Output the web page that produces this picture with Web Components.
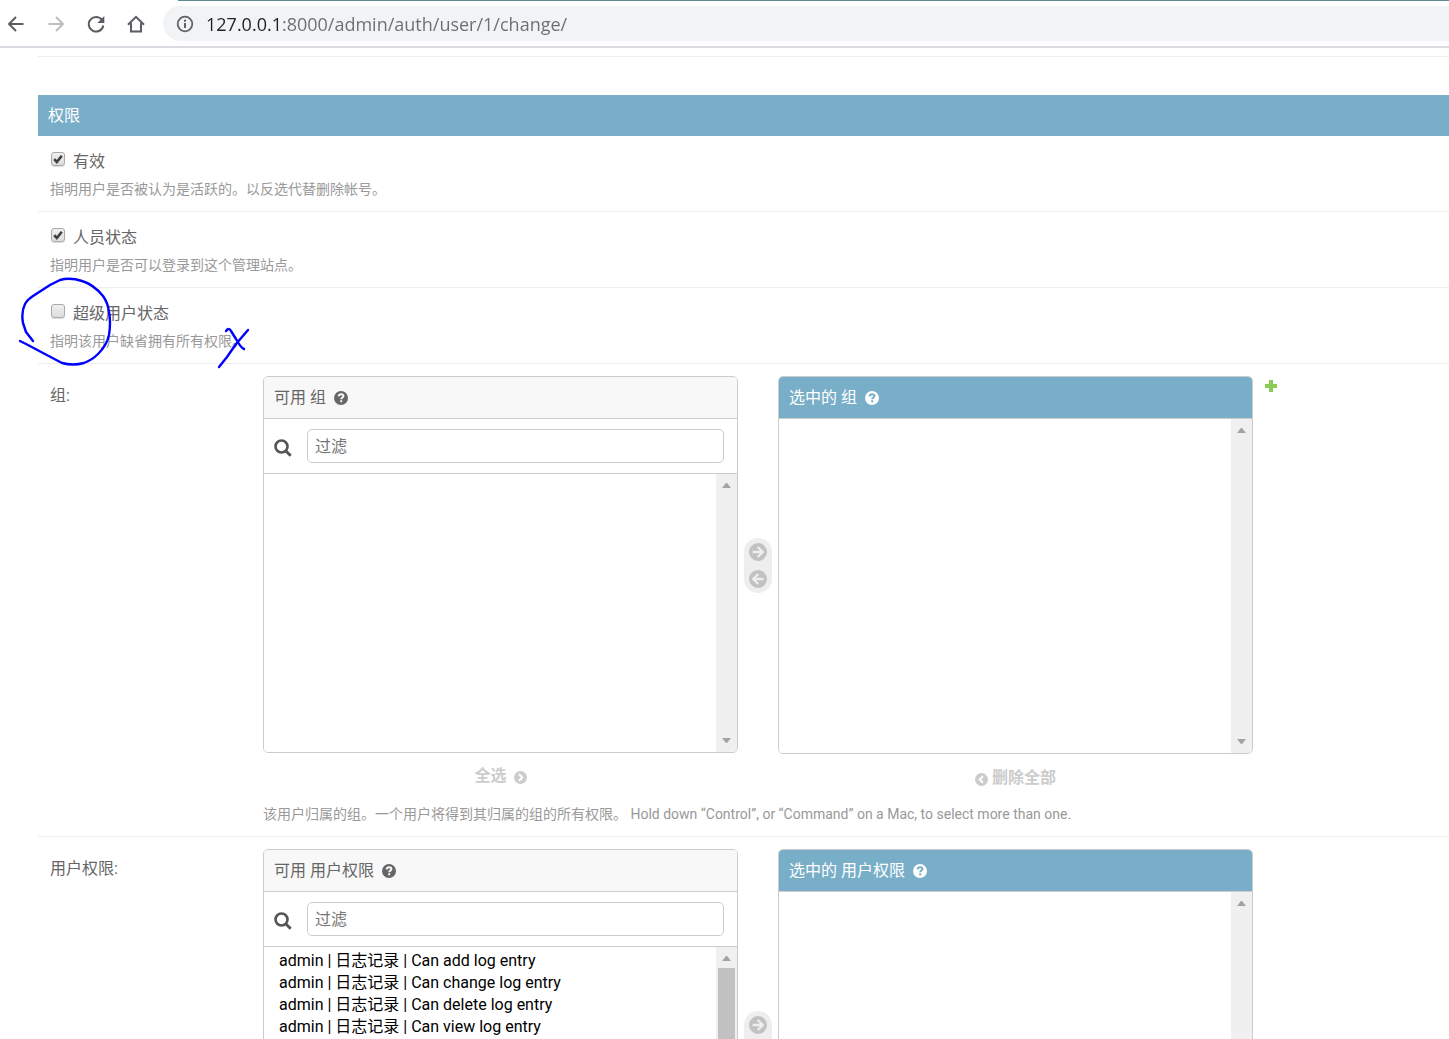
<!DOCTYPE html>
<html lang="zh-CN">
<head>
<meta charset="utf-8">
<title>修改 用户</title>
<style>
  body {
    margin: 0;
    background: #fff;
    color: #666;
    font: 16px/24px Roboto, "Noto Sans CJK SC", sans-serif;
    overflow-x: hidden;
  }
</style>
</head>
<body>
<admin-page>
  <browser-bar slot="bar" host="127.0.0.1" path=":8000/admin/auth/user/1/change/"></browser-bar>
  <field-module heading="权限">
    <check-row checked><span>有效</span><span slot="help">指明用户是否被认为是活跃的。以反选代替删除帐号。</span></check-row>
    <check-row checked><span>人员状态</span><span slot="help">指明用户是否可以登录到这个管理站点。</span></check-row>
    <check-row><span>超级用户状态</span><span slot="help">指明该用户缺省拥有所有权限。</span></check-row>
    <selector-row name="组" addable bulk>
      <span slot="help">该用户归属的组。一个用户将得到其归属的组的所有权限。 Hold down “Control”, or “Command” on a Mac, to select more than one.</span>
    </selector-row>
    <selector-row name="用户权限">
      <option>admin | 日志记录 | Can add log entry</option>
      <option>admin | 日志记录 | Can change log entry</option>
      <option>admin | 日志记录 | Can delete log entry</option>
      <option>admin | 日志记录 | Can view log entry</option>
    </selector-row>
  </field-module>
  <ink-marks slot="ink"></ink-marks>
</admin-page>

<script>
class Base extends HTMLElement {
  connectedCallback() {
    if (this.shadowRoot) return;
    const root = this.attachShadow({ mode: 'open' });
    root.innerHTML = this.view();
    this.ready(root);
  }
  ready() {}
}

const ICONS = {
  back: [20, '<path d="M17.500 10H3.500M10 3L3 10l7 7" fill="none" stroke="currentColor" stroke-width="2"/>'],
  forward: [20, '<path d="M2.500 10H16.500M10 3l7 7-7 7" fill="none" stroke="currentColor" stroke-width="2"/>'],
  reload: [20, '<path d="M16.300 6.400A7.300 7.300 0 1 0 17.300 11.500" fill="none" stroke="currentColor" stroke-width="2"/><path d="M18.300 2v7h-7z" fill="currentColor"/>'],
  home: [20, '<path d="M2 10.800L10 2.800l8 8M5 9V17.500h10V9" fill="none" stroke="currentColor" stroke-width="2"/>'],
  info: [18, '<circle cx="9" cy="9" r="7.300" fill="none" stroke="currentColor" stroke-width="1.800"/><path d="M9 8v5M9 4.800v1.900" stroke="currentColor" stroke-width="2"/>'],
  help: [14, '<circle cx="7" cy="7" r="7" fill="currentColor"/><path d="M4.700 5.300C4.900 3.900 5.900 3.300 7.100 3.300c1.300 0 2.300.7 2.300 1.800 0 1.500-2.200 1.500-2.200 3.100M7.200 9.200v2" fill="none" stroke="var(--cut,#fff)" stroke-width="2"/>'],
  search: [18, '<circle cx="7.500" cy="7.500" r="6" fill="none" stroke="currentColor" stroke-width="2.600"/><path d="M11.700 11.700l5 5" stroke="currentColor" stroke-width="3"/>'],
  right: [18, '<circle cx="9" cy="9" r="9" fill="currentColor"/><path d="M3.500 9h10M8.700 4l5 5-5 5" fill="none" stroke="var(--cut,#fff)" stroke-width="2.400"/>'],
  left: [18, '<circle cx="9" cy="9" r="9" fill="currentColor"/><path d="M14.500 9h-10M9.300 4l-5 5 5 5" fill="none" stroke="var(--cut,#fff)" stroke-width="2.400"/>'],
  next: [13, '<circle cx="6.500" cy="6.500" r="6.500" fill="currentColor"/><path d="M5 3.200l3.300 3.300L5 9.800" fill="none" stroke="#fff" stroke-width="2"/>'],
  prev: [13, '<circle cx="6.500" cy="6.500" r="6.500" fill="currentColor"/><path d="M8 3.200L4.700 6.500 8 9.800" fill="none" stroke="#fff" stroke-width="2"/>'],
  plus: [12, '<path d="M6 0v12M0 6h12" stroke="currentColor" stroke-width="4"/>']
};

customElements.define('ui-icon', class extends Base {
  view() {
    const [size, art] = ICONS[this.getAttribute('name')];
    return `<style>:host{display:inline-flex;flex:none}svg{display:block}</style>
      <svg width="${size}" height="${size}" viewBox="0 0 ${size} ${size}" aria-hidden="true">${art}</svg>`;
  }
});

customElements.define('admin-page', class extends Base {
  view() {
    return `<style>
      :host{display:block;position:relative}
      main{padding-left:38px}
      .previous{height:8px;border-bottom:1px solid #eee;margin-bottom:38px}
    </style>
    <slot name="bar"></slot>
    <main><div class="previous"></div><slot></slot></main>
    <slot name="ink"></slot>`;
  }
});

customElements.define('browser-bar', class extends Base {
  view() {
    const host = this.getAttribute('host');
    return `<style>
      :host{display:block;background:#fff;border-bottom:2px solid #dadbe0}
      .tabs{height:1px;margin-left:178px;background:#5f8795}
      .bar{display:flex;align-items:center;padding:5px 0}
      nav{display:flex;gap:8px;padding-right:11px}
      button{display:flex;align-items:center;justify-content:center;width:32px;height:32px;padding:0;border:0;border-radius:16px;background:none;color:#5a5d61}
      button:disabled{color:#bbbdbf}
      .address{flex:1;display:flex;align-items:center;gap:12px;height:35px;padding-left:13px;border-radius:18px 0 0 18px;background:#f1f3f4;color:#5f6368}
      input{flex:1;min-width:0;height:30px;padding:0;border:0;outline:0;color:#5f6368;font:18px/30px "Open Sans",sans-serif;
        background:linear-gradient(90deg,#202124 var(--host-width),#6a6d71 var(--host-width));-webkit-background-clip:text;background-clip:text;-webkit-text-fill-color:transparent}
    </style>
    <div class="tabs"></div>
    <div class="bar">
      <nav>
        <button aria-label="后退"><ui-icon name="back"></ui-icon></button>
        <button aria-label="前进" disabled><ui-icon name="forward"></ui-icon></button>
        <button aria-label="重新加载"><ui-icon name="reload"></ui-icon></button>
        <button aria-label="主页"><ui-icon name="home"></ui-icon></button>
      </nav>
      <div class="address"><ui-icon name="info"></ui-icon>
        <input aria-label="地址" spellcheck="false" value="${host}${this.getAttribute('path')}">
      </div>
    </div>`;
  }
  ready(root) {
    // The host part of the address is darker than its path.
    const input = root.querySelector('input');
    const pen = document.createElement('canvas').getContext('2d');
    pen.font = getComputedStyle(input).font;
    input.style.setProperty('--host-width', Math.round(pen.measureText(this.getAttribute('host')).width) + 'px');
  }
});

customElements.define('field-module', class extends Base {
  view() {
    return `<style>
      :host{display:block}
      h2{margin:0;padding:9px 10px 8px;background:#79aec8;color:#fff;font-size:16px;line-height:24px;font-weight:400}
    </style><h2>${this.getAttribute('heading')}</h2><slot></slot>`;
  }
});

customElements.define('check-row', class extends Base {
  view() {
    return `<style>
      :host{display:block;padding:12px;border-bottom:1px solid #eee}
      .line{display:flex;align-items:flex-start;gap:8px}
      label{padding-top:2px}
      input{appearance:none;flex:none;width:14px;height:14px;margin:4px 0 0 1px;border:1px solid #aaa;border-radius:3px;
        background:linear-gradient(#f0f0f0,#dcdcdc);box-shadow:0 1px 1px #ddd}
      input:checked{background:url("data:image/svg+xml,%3Csvg xmlns='http://www.w3.org/2000/svg' viewBox='0 0 12 12'%3E%3Cpath d='M2.200 6.200l2.600 2.800L9.800 2.800' fill='none' stroke='%23404040' stroke-width='2.600'/%3E%3C/svg%3E") center/12px,linear-gradient(#f0f0f0,#dcdcdc)}
      .help{margin-top:5px;color:#999;font-size:14px;line-height:20px}
    </style>
    <div class="line"><input type="checkbox" id="c" ${this.hasAttribute('checked') ? 'checked' : ''}><label for="c"><slot></slot></label></div>
    <div class="help"><slot name="help"></slot></div>`;
  }
});

customElements.define('scroll-rail', class extends Base {
  view() {
    return `<style>
      :host{display:flex;flex:none;flex-direction:column;align-items:center;width:21px;background:#f0f0f0}
      svg{display:block;flex:none}
      .track{flex:1;align-self:stretch;padding:0 2px}
      .thumb{height:90px;background:#c1c1c1}
    </style>
    <svg width="21" height="21"><path d="M6 14h9l-4-5h-1z" fill="#a3a3a3"/></svg>
    <div class="track">${this.hasAttribute('thumb') ? '<div class="thumb"></div>' : ''}</div>
    <svg width="21" height="21"><path d="M6 7h9l-4 5h-1z" fill="#a3a3a3"/></svg>`;
  }
});

customElements.define('selector-row', class extends Base {
  view() {
    const name = this.getAttribute('name');
    const full = this.querySelector('option') ? 'thumb' : '';
    const bulk = this.hasAttribute('bulk');
    return `<style>
      :host{display:flex;padding:12px;border-bottom:1px solid #eee}
      a{text-decoration:none;color:inherit}
      .name{flex:none;width:213px;padding-top:8px;box-sizing:border-box}
      .selector{display:flex;align-items:flex-start}
      .column{width:475px}
      .box{border:1px solid #ccc;border-radius:5px;overflow:hidden}
      h3{display:flex;align-items:center;gap:8px;box-sizing:border-box;height:42px;margin:0;padding:1px 10px 0;border-bottom:1px solid #ccc;background:#f8f8f8;font-size:16px;font-weight:400;--cut:#f8f8f8}
      .chosen h3{background:#79aec8;color:#fff;--cut:#79aec8}
      .filter{display:flex;align-items:center;gap:15px;padding:10px 13px 10px 10px;border-bottom:1px solid #ccc;color:#555}
      .filter label{display:flex;padding-top:3px}
      .filter input{flex:1;min-width:0;height:34px;box-sizing:border-box;padding:0 7px;border:1px solid #ccc;border-radius:5px;font:inherit;color:#333}
      ::placeholder{color:#757575;opacity:1}
      .list{display:flex;height:278px}
      .chosen .list{height:334px}
      select{flex:1;min-width:0;margin:0;padding:0 11px;border:0;outline:0;background:#fff;color:#000;font:inherit;scrollbar-width:none}
      option{padding:0 4px;min-height:22px;height:22px;line-height:22px}
      .moves{display:flex;flex-direction:column;align-items:center;gap:9px;margin:162px 6px 0;padding:5px;border-radius:14px;background:#eee;color:#c2c2c2;--cut:#eee}
      .moves a{display:flex}
      .all{display:flex;align-items:center;justify-content:center;gap:7px;margin-top:11px;color:#ccc;font-weight:700}
      .all ui-icon{padding-top:2px}
      .chosen .all{gap:4px;margin-top:12px}
      .add{display:flex;margin:4px 0 0 12px;color:#8c5}
      .help{margin-top:14px;color:#999;font-size:14px;line-height:20px}
    </style>
    <label class="name" for="from">${name}:</label>
    <div>
      <div class="selector">
        <div class="column">
          <div class="box">
            <h3>可用 ${name}<ui-icon name="help"></ui-icon></h3>
            <div class="filter"><label for="filter" aria-label="过滤"><ui-icon name="search"></ui-icon></label><input id="filter" type="text" placeholder="过滤"></div>
            <div class="list"><select id="from" multiple></select><scroll-rail ${full}></scroll-rail></div>
          </div>
          ${bulk ? '<a class="all" href="#">全选<ui-icon name="next"></ui-icon></a>' : ''}
        </div>
        <div class="moves"><a href="#" aria-label="选择"><ui-icon name="right"></ui-icon></a><a href="#" aria-label="删除"><ui-icon name="left"></ui-icon></a></div>
        <div class="column chosen">
          <div class="box">
            <h3>选中的 ${name}<ui-icon name="help"></ui-icon></h3>
            <div class="list"><select aria-label="选中的 ${name}" multiple></select><scroll-rail></scroll-rail></div>
          </div>
          ${bulk ? '<a class="all" href="#"><ui-icon name="prev"></ui-icon>删除全部</a>' : ''}
        </div>
        ${this.hasAttribute('addable') ? '<a class="add" href="#" aria-label="添加"><ui-icon name="plus"></ui-icon></a>' : ''}
      </div>
      <div class="help"><slot name="help"></slot></div>
    </div>`;
  }
  ready(root) {
    root.querySelector('#from').append(...this.querySelectorAll('option'));
  }
});

customElements.define('ink-marks', class extends Base {
  view() {
    return `<style>:host{position:absolute;left:18px;top:276px;pointer-events:none}svg{display:block}</style>
    <svg width="234" height="96" viewBox="18 276 234 96" fill="none" stroke="#00f" stroke-width="2.400" stroke-linecap="round" stroke-linejoin="round">
      <path d="M33 341L26 332L23 323Q21 312 25 304Q27 300 33 296L50 285L60 280Q70 277 82 281Q93 284 103 296Q108 303 109 312Q111 322 109 335Q107 345 98 354Q92 360 84 363Q73 366 62 363L43 353L28 345L20 341"/>
      <path d="M248 330L236 344L227 357L219 367M226 331Q229 327 231 331L236 339Q241 348 244 349"/>
    </svg>`;
  }
});
</script>
</body>
</html>
